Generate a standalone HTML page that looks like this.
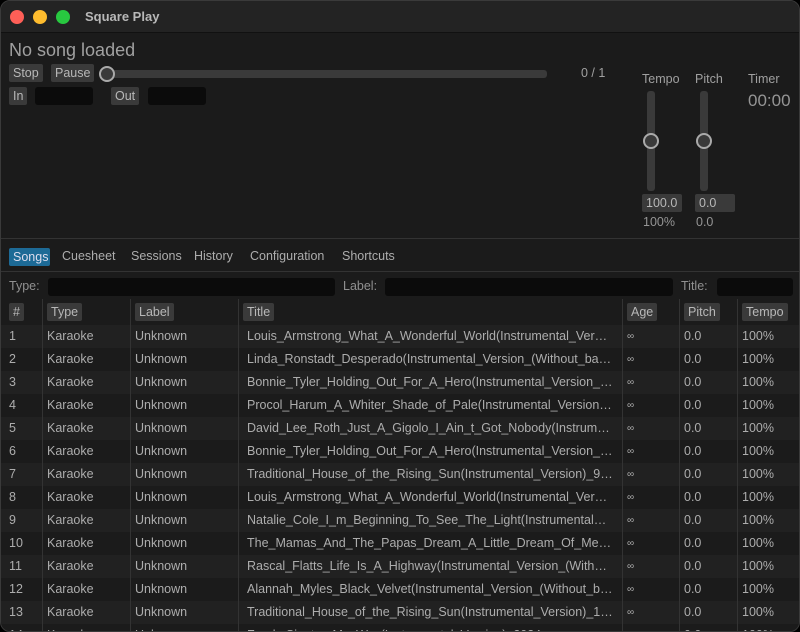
<!DOCTYPE html><html><head><style>
*{margin:0;padding:0;box-sizing:border-box}
body{width:800px;height:632px;background:#000;font-family:"Liberation Sans","DejaVu Sans",sans-serif;font-size:12.5px;color:#adadad;overflow:hidden;position:relative}
.win{position:absolute;left:0;top:0;width:800px;height:632px;background:#1b1b1b;border-radius:10px;border:1px solid #3a3a3a;overflow:hidden}
.tb{position:absolute;left:0;top:0;width:800px;height:32px;background:#232323;border-bottom:1px solid #111}
.dot{position:absolute;top:9px;width:14px;height:14px;border-radius:7px}
.a{position:absolute;white-space:nowrap}
.btn{position:absolute;background:#3a3a3a;border-radius:2px;color:#b8b8b8;padding:0 4px;height:18px;line-height:18px}
.field{position:absolute;background:#0b0b0b;border-radius:3px;height:18px}
.row{position:absolute;left:0;width:800px;height:23px;line-height:23px}
.row span{position:absolute;white-space:nowrap}
.sep{position:absolute;top:298px;height:334px;width:1px;background:#333}
</style></head><body><div class="win">
<div class="tb"><div class="dot" style="left:9px;background:#fe5f57"></div><div class="dot" style="left:32px;background:#febc2e"></div><div class="dot" style="left:55px;background:#28c840"></div>
<div class="a" style="left:84px;top:8px;font-weight:bold;color:#b8b8b8;font-size:13px">Square Play</div></div>
<div class="a" style="left:8px;top:39px;font-size:18px;color:#a0a0a0">No song loaded</div>
<div class="btn" style="left:8px;top:63px">Stop</div>
<div class="btn" style="left:50px;top:63px">Pause</div>
<div class="a" style="left:100px;top:69px;width:446px;height:8px;background:#3a3a3a;border-radius:3px"></div>
<div class="a" style="left:98px;top:65px;width:16px;height:16px;border-radius:8px;border:2px solid #aaa;background:#3a3a3a"></div>
<div class="a" style="left:580px;top:65px;color:#a0a0a0">0 / 1</div>
<div class="btn" style="left:8px;top:86px">In</div>
<div class="field" style="left:34px;top:86px;width:58px"></div>
<div class="btn" style="left:110px;top:86px">Out</div>
<div class="field" style="left:147px;top:86px;width:58px"></div>
<div class="a" style="left:641px;top:71px;color:#a0a0a0">Tempo</div>
<div class="a" style="left:694px;top:71px;color:#a0a0a0">Pitch</div>
<div class="a" style="left:747px;top:71px;color:#a0a0a0">Timer</div>
<div class="a" style="left:747px;top:90px;font-size:17px;color:#959595">00:00</div>
<div class="a" style="left:646px;top:90px;width:8px;height:100px;background:#3a3a3a;border-radius:3px"></div>
<div class="a" style="left:699px;top:90px;width:8px;height:100px;background:#3a3a3a;border-radius:3px"></div>
<div class="a" style="left:642px;top:132px;width:16px;height:16px;border-radius:8px;border:2px solid #aaa;background:#3a3a3a"></div>
<div class="a" style="left:695px;top:132px;width:16px;height:16px;border-radius:8px;border:2px solid #aaa;background:#3a3a3a"></div>
<div class="btn" style="left:641px;top:193px;width:40px">100.0</div>
<div class="btn" style="left:694px;top:193px;width:40px">0.0</div>
<div class="a" style="left:642px;top:214px;color:#959595">100%</div>
<div class="a" style="left:695px;top:214px;color:#959595">0.0</div>
<div class="a" style="left:0;top:237px;width:800px;height:1px;background:#333"></div>
<div class="a" style="left:8px;top:247px;width:41px;background:#1d6a96;color:#dde;padding:0 4px;height:18px;line-height:18px;border-radius:2px">Songs</div>
<div class="a" style="left:61px;top:248px">Cuesheet</div>
<div class="a" style="left:130px;top:248px">Sessions</div>
<div class="a" style="left:193px;top:248px">History</div>
<div class="a" style="left:249px;top:248px">Configuration</div>
<div class="a" style="left:341px;top:248px">Shortcuts</div>
<div class="a" style="left:0;top:270px;width:800px;height:1px;background:#333"></div>
<div class="a" style="left:8px;top:278px;color:#909090">Type:</div>
<div class="field" style="left:47px;top:277px;width:287px"></div>
<div class="a" style="left:342px;top:278px;color:#909090">Label:</div>
<div class="field" style="left:384px;top:277px;width:288px"></div>
<div class="a" style="left:680px;top:278px;color:#909090">Title:</div>
<div class="field" style="left:716px;top:277px;width:76px"></div>
<div class="btn" style="left:8px;top:302px">#</div>
<div class="btn" style="left:46px;top:302px">Type</div>
<div class="btn" style="left:134px;top:302px">Label</div>
<div class="btn" style="left:242px;top:302px">Title</div>
<div class="btn" style="left:626px;top:302px">Age</div>
<div class="btn" style="left:683px;top:302px">Pitch</div>
<div class="btn" style="left:741px;top:302px">Tempo</div>
<div id="rows"></div>
<div class="sep" style="left:41px"></div><div class="sep" style="left:129px"></div><div class="sep" style="left:237px"></div><div class="sep" style="left:621px"></div><div class="sep" style="left:678px"></div><div class="sep" style="left:736px"></div>
</div>
<script>
var t=["Louis_Armstrong_What_A_Wonderful_World(Instrumental_Version)","Linda_Ronstadt_Desperado(Instrumental_Version_(Without_backing))","Bonnie_Tyler_Holding_Out_For_A_Hero(Instrumental_Version_(Without))","Procol_Harum_A_Whiter_Shade_of_Pale(Instrumental_Version)_2024","David_Lee_Roth_Just_A_Gigolo_I_Ain_t_Got_Nobody(Instrumental)","Bonnie_Tyler_Holding_Out_For_A_Hero(Instrumental_Version_(Without))","Traditional_House_of_the_Rising_Sun(Instrumental_Version)_9_2024","Louis_Armstrong_What_A_Wonderful_World(Instrumental_Version)","Natalie_Cole_I_m_Beginning_To_See_The_Light(Instrumental_Version)","The_Mamas_And_The_Papas_Dream_A_Little_Dream_Of_Me(Instrumental)","Rascal_Flatts_Life_Is_A_Highway(Instrumental_Version_(Without_b))","Alannah_Myles_Black_Velvet(Instrumental_Version_(Without_backing))","Traditional_House_of_the_Rising_Sun(Instrumental_Version)_1_2024","Frank_Sinatra_My_Way(Instrumental_Version)_2024"];
var h="";for(var i=0;i<14;i++){h+='<div class="row" style="top:'+(324+23*i)+'px;background:'+(i%2==0?'#212121':'#1b1b1b')+'"><span style="left:8px">'+(i+1)+'</span><span style="left:46px">Karaoke</span><span style="left:134px">Unknown</span><span style="left:246px;width:366px;overflow:hidden;text-overflow:ellipsis">'+t[i]+'</span><span style="left:626px;font-size:10px">∞</span><span style="left:683px">0.0</span><span style="left:741px">100%</span></div>';}
document.getElementById("rows").innerHTML=h;
</script>
</body></html>
